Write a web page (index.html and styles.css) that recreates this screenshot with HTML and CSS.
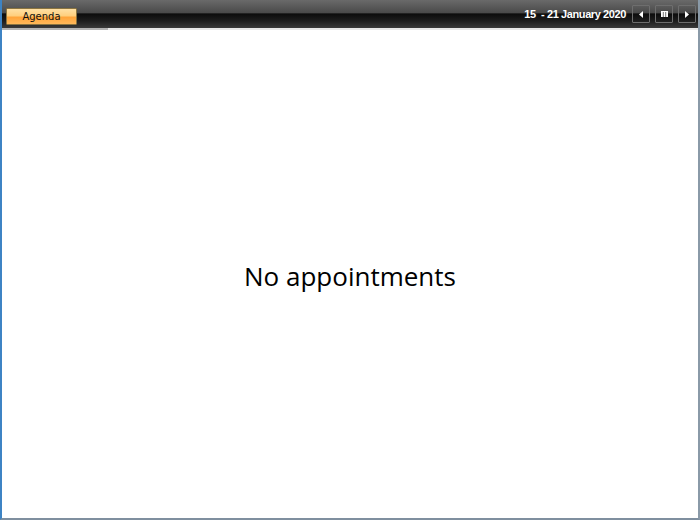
FILE: index.html
```html
<!DOCTYPE html>
<html lang="en">
<head>
  <meta charset="utf-8">
  <title>Scheduler - Agenda</title>
  <link rel="stylesheet" href="styles.css">
</head>
<body>
  <div class="scheduler">
    <header class="toolbar">
      <div class="views">
        <button class="view-button active">Agenda</button>
      </div>
      <div class="nav">
        <span class="date-range">15&nbsp; - 21 January 2020</span>
        <button class="nav-button" title="Previous">
          <svg width="6" height="7" viewBox="0 0 6 7"><path d="M5 0 L1 3.5 L5 7 Z" fill="#fff"/></svg>
        </button>
        <button class="nav-button" title="Calendar">
          <svg width="7" height="6" viewBox="0 0 7 6"><rect x="0" y="0" width="7" height="6" fill="#fff"/><path d="M2.3 1 V6 M4.7 1 V6" stroke="#555" stroke-width="0.8"/></svg>
        </button>
        <button class="nav-button" title="Next">
          <svg width="6" height="7" viewBox="0 0 6 7"><path d="M1 0 L5 3.5 L1 7 Z" fill="#fff"/></svg>
        </button>
      </div>
    </header>
    <div class="tab-strip">
      <div class="tab-strip-active"></div>
    </div>
    <main class="agenda">
      <p class="empty-message">No appointments</p>
    </main>
  </div>
</body>
</html>
```

FILE: styles.css
```css
:root {
  --frame-color: #3d83c4;
  --text-color: #000000;
}

* {
  margin: 0;
  padding: 0;
  box-sizing: border-box;
}

body {
  width: 700px;
  height: 520px;
  font-family: 'Open Sans', 'Noto Sans', sans-serif;
  background: #ffffff;
  overflow: hidden;
}

.scheduler {
  width: 700px;
  height: 520px;
  display: flex;
  flex-direction: column;
  border-left: 2px solid var(--frame-color);
  border-right: 2px solid #8a9aa8;
  border-bottom: 2px solid #7f8f9f;
}

.toolbar {
  height: 28px;
  display: flex;
  justify-content: space-between;
  align-items: center;
  padding: 0 2px 0 4px;
  background: linear-gradient(to bottom, #6a6a6a 0%, #4a4a4a 45%, #0c0c0c 50%, #1e1e1e 75%, #3a3a3a 100%);
}

.view-button {
  width: 71px;
  height: 17px;
  font-family: 'DejaVu Sans', 'Liberation Sans', sans-serif;
  font-size: 10px;
  color: #111;
  border: 1px solid #8a7440;
  border-radius: 1px;
  background: linear-gradient(to bottom, #ffe0a4 0%, #ffcf7e 45%, #ffa43a 55%, #ffb85a 100%);
  cursor: pointer;
}

.nav {
  display: flex;
  align-items: center;
  gap: 5px;
}

.date-range {
  font-family: 'Liberation Sans', sans-serif;
  font-size: 11px;
  font-weight: bold;
  color: #ffffff;
  margin-right: 1px;
  letter-spacing: -0.4px;
}

.nav-button {
  width: 18px;
  height: 18px;
  display: flex;
  align-items: center;
  justify-content: center;
  border: 1px solid #6e6e6e;
  border-radius: 1px;
  background: transparent;
  cursor: pointer;
}

.tab-strip {
  height: 2px;
  background: #e8e8e8;
}

.tab-strip-active {
  width: 106px;
  height: 2px;
  background: #b4b4b4;
}

.agenda {
  flex: 1;
  display: flex;
  align-items: center;
  justify-content: center;
  padding-top: 3px;
}

.empty-message {
  font-size: 26px;
  color: var(--text-color);
}
```
